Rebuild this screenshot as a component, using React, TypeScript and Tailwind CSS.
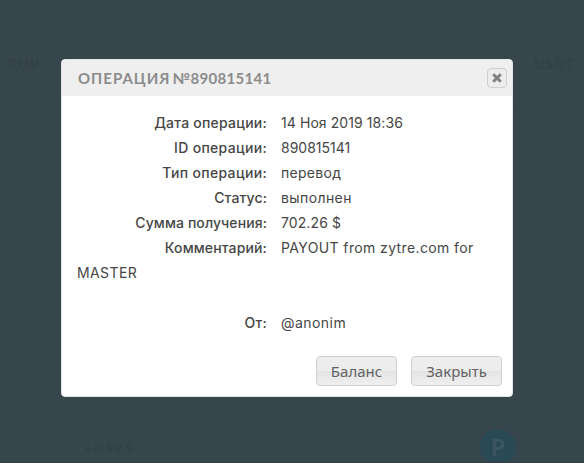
import type { ReactNode } from "react";

const body = "font-['Inter','Liberation_Sans',sans-serif]";

function Row({ label, labelClass, valueClass, children }: { label: string; labelClass: string; valueClass: string; children: ReactNode }) {
  return (
    <div className="flex h-[25px] items-center whitespace-nowrap leading-[25px]">
      <div className="flex w-[190px] justify-end">
        <span className={"font-medium " + labelClass}>{label}</span>
      </div>
      <span className={"ml-[14px] " + valueClass}>{children}</span>
    </div>
  );
}

function DialogButton({ width, children }: { width: string; children: ReactNode }) {
  return (
    <button
      className={
        "h-[30px] rounded-[4px] border border-[#cfcfcf] bg-linear-to-b from-[#ededed] from-50% via-[#e4e4e4] via-50% to-[#efefef] pt-px text-[15px] leading-[27px] text-[#626262] font-['Noto_Sans','Open_Sans',sans-serif] " +
        width
      }
    >
      {children}
    </button>
  );
}

export default function App() {
  return (
    <div className={"relative h-[463px] w-[584px] overflow-hidden bg-[#37464c] text-[14px] text-[#464646] " + body}>
      <div className="h-7 border-b border-[#35444a]" />
      <div className="h-14 border-b border-[#36454b] font-['Lato',sans-serif] text-[14px] font-bold tracking-[1.4px] text-[#324147]">
        <div className="flex justify-between pl-2 pr-2 pt-[26px] leading-[20px]">
          <span>RUB</span>
          <span>USDT</span>
        </div>
      </div>
      <div className="h-[26px] border-b border-[#35444a]" />
      <div className="h-[42px] border-b border-[#36454b]" />
      <div className="h-[58px] border-b border-[#36454b]" />
      <div className="mt-[219px] flex h-[36px] items-center pl-[84px] pr-[68px] font-['Lato',sans-serif] text-[14px] font-bold text-[#324147]">
        <span className="tracking-[-0.2px]">+ 0.99 $</span>
        <span className="ml-[182px] tracking-[-0.5px]">--</span>
        <span className="ml-auto flex size-9 items-center justify-center rounded-full bg-[#294954] text-[22px] font-black text-[#3a555f]">
          P
        </span>
      </div>
      <div className="absolute inset-x-0 bottom-0 h-px bg-[#303e45]" />

      <section className="absolute left-[61px] top-[59px] flex h-[338px] w-[452px] flex-col overflow-hidden rounded-[4px] border border-[#e2e5e6] bg-white">
        <header className="flex h-9 shrink-0 items-center justify-between bg-[#efefef] pl-[16px] pr-[5px]">
          <h1 className="flex gap-[2px] font-['Lato',sans-serif] text-[15px] font-bold text-[#8c8c8c]">
            <span className="tracking-[1px]">ОПЕРАЦИЯ</span>
            <span className="tracking-[0.3px]">№890815141</span>
          </h1>
          <button className="flex size-5 items-center justify-center rounded-[4px] border border-[#cfcfcf] bg-[#ededed]" aria-label="Закрыть">
            <svg className="size-[10px]" viewBox="0 0 10 10" fill="none" stroke="#828282" strokeWidth="3">
              <path d="M1.2 1.2 8.8 8.8M8.8 1.2 1.2 8.8" />
            </svg>
          </button>
        </header>
        <div className="mt-[14px] h-[225px] shrink-0 pl-[15px]">
          <Row label="Дата операции:" labelClass="tracking-[0.24px]" valueClass="tracking-[0.08px]">14 Ноя 2019 18:36</Row>
          <Row label="ID операции:" labelClass="tracking-[0.32px]" valueClass="">890815141</Row>
          <Row label="Тип операции:" labelClass="tracking-[0.34px]" valueClass="tracking-[0.3px]">перевод</Row>
          <Row label="Статус:" labelClass="tracking-[0.12px]" valueClass="tracking-[0.4px]">выполнен</Row>
          <Row label="Сумма получения:" labelClass="tracking-[0.1px]" valueClass="tracking-[0.1px]">702.26 $</Row>
          <Row label="Комментарий:" labelClass="tracking-[0.14px]" valueClass="tracking-[0.38px]">PAYOUT from zytre.com for</Row>
          <div className="mb-[25px] h-[25px] leading-[25px] tracking-[0.4px]">MASTER</div>
          <Row label="От:" labelClass="tracking-[0.3px]" valueClass="tracking-[0.45px]">@anonim</Row>
        </div>
        <footer className="mt-[21px] flex justify-end gap-[14px] pr-[10px]">
          <DialogButton width="w-[81px]">Баланс</DialogButton>
          <DialogButton width="w-[91px]">Закрыть</DialogButton>
        </footer>
      </section>
    </div>
  );
}
